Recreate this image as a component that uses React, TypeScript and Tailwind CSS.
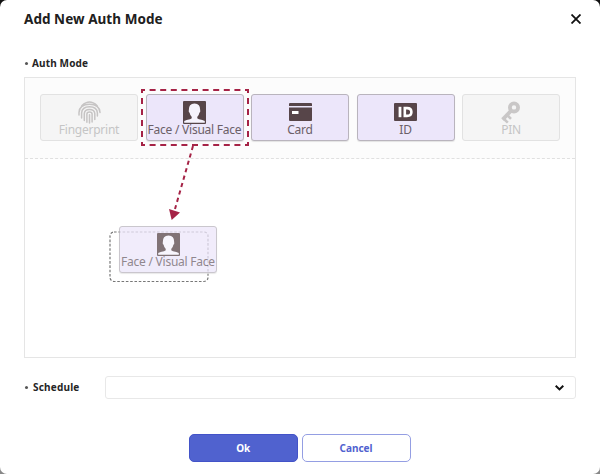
import React from "react";

function FingerprintIcon() {
  return (
    <svg width="23" height="23" viewBox="0 0 23 23" className="block" fill="none" stroke="#c6c4c4" strokeWidth="1.5" strokeLinecap="round">
      <path d="M4 4.5Q11.5 -2.5 19 4.5" />
      <path d="M1 14V11.5Q1.5 3.2 11.5 3.2Q21.5 3.2 22 11.5" />
      <path d="M3.6 17V12Q4 5.8 11.5 5.8Q19 5.8 19.4 12V15" />
      <path d="M6.3 19.5V12.5Q6.5 8.4 11.5 8.4Q16.5 8.4 16.8 12.5V18.5" />
      <path d="M8.9 21.3V13Q9 11 11.5 11Q14 11 14.1 13V21" />
      <path d="M11.5 13.8V22" />
    </svg>
  );
}

function FaceIcon() {
  return (
    <svg width="23" height="23" viewBox="0 0 23 23" className="block">
      <rect width="23" height="23" rx="1" fill="#574549" />
      <path
        d="M1.2 21.8V20Q3.2 18.6 7 18.2Q9.2 17.8 8.8 16Q7 14.4 6.6 11.8Q5.4 11.2 5.8 9.2Q5.6 2.6 11.5 2.5Q17.4 2.6 17.2 9.2Q17.6 11.2 16.4 11.8Q16 14.4 14.2 16Q13.8 17.8 16 18.2Q19.8 18.6 21.8 20V21.8Z"
        fill="#f6f3fd"
      />
    </svg>
  );
}

function CardIcon() {
  return (
    <svg width="23" height="18" viewBox="0 0 23 18" className="mb-px block">
      <path d="M1 0H22Q23 0 23 1V3H0V1Q0 0 1 0Z" fill="#574549" />
      <path d="M0 4.5H23V17Q23 18 22 18H1Q0 18 0 17Z" fill="#574549" />
      <rect x="3" y="8" width="6.5" height="3" fill="#fff" />
    </svg>
  );
}

function IdIcon() {
  return (
    <svg width="23" height="18" viewBox="0 0 23 18" className="mb-px block">
      <rect width="23" height="18" rx="1" fill="#574549" />
      <path d="M6 3.8V14.2" stroke="#fff" strokeWidth="2.8" />
      <path d="M10.8 5.1H13Q17.4 5.1 17.4 9Q17.4 12.9 13 12.9H10.8Z" fill="none" stroke="#fff" strokeWidth="2.6" />
    </svg>
  );
}

function KeyIcon() {
  return (
    <svg width="20" height="23" viewBox="0 0 20 23" className="block" fill="none" stroke="#c9c7c7">
      <circle cx="13" cy="6.4" r="4.1" strokeWidth="3.8" />
      <path d="M9.8 10L1.6 18.6" strokeWidth="3.8" />
      <path d="M6 13.8L10 17.8M2.2 17.2L6.8 21.6" strokeWidth="2.6" />
    </svg>
  );
}

type ModeProps = { label: string; children: React.ReactNode; disabled?: boolean };

function Mode({ label, children, disabled }: ModeProps) {
  return (
    <div
      className={
        "flex h-[47px] w-[98px] shrink-0 flex-col items-center rounded-[3px] border pt-[6px] text-[12px] leading-[12px] " +
        (disabled
          ? "border-[#e2e2e2] bg-[#f5f5f5] text-[#c5c5c5]"
          : "border-[#b9b4bd] bg-[#ece6fa] text-[#6b6068] shadow-[0_1px_1px_#e3e3e3]")
      }
    >
      <div className="flex h-[23px] shrink-0 items-center">{children}</div>
      <span className="tracking-[-0.24px] whitespace-nowrap">{label}</span>
    </div>
  );
}

export default function App() {
  return (
    <div className="h-[474px] w-[600px] bg-[linear-gradient(#111_50%,#888_50%)] font-['Noto_Sans','Open_Sans',sans-serif]">
      <main className="relative flex h-full flex-col overflow-hidden rounded-[7px] bg-white px-6">
        <header className="flex h-[38px] items-center justify-between">
          <h1 className="text-[13.5px] leading-[18px] font-bold tracking-[0.05px] text-[#202020]">Add New Auth Mode</h1>
          <svg width="10" height="10" viewBox="0 0 10 10" className="mr-[-5px] block" stroke="#111" strokeWidth="1.8">
            <path d="M0.5 0.5L9.5 9.5M9.5 0.5L0.5 9.5" />
          </svg>
        </header>
        <div className="mt-[17px] flex h-[16px] items-center text-[10px] font-bold tracking-[0.15px] text-[#252525]">
          <i className="mr-[4px] ml-px size-[3px] rounded-full bg-[#555]" />
          Auth Mode
        </div>
        <section className="mt-[6px] h-[281px] w-[552px] border border-[#e5e5e5]">
          <div className="flex h-[81px] gap-[7.5px] border-b border-dashed border-[#e0e0e0] bg-[#fcfcfc] pt-[16px] pl-[15px]">
            <Mode label="Fingerprint" disabled>
              <FingerprintIcon />
            </Mode>
            <Mode label="Face / Visual Face">
              <FaceIcon />
            </Mode>
            <Mode label="Card">
              <CardIcon />
            </Mode>
            <Mode label="ID">
              <IdIcon />
            </Mode>
            <Mode label="PIN" disabled>
              <KeyIcon />
            </Mode>
          </div>
        </section>
        <div className="mt-[18px] flex h-[23px] items-center">
          <div className="flex w-[81px] items-center text-[10px] font-bold tracking-[0.2px] text-[#252525]">
            <i className="mr-[5px] ml-px size-[3px] rounded-full bg-[#555]" />
            Schedule
          </div>
          <div className="flex h-[23px] w-[471px] items-center justify-end rounded-[3px] border border-[#e8e8e8] pr-[11px]">
            <svg width="9" height="6" viewBox="0 0 9 6" fill="none" stroke="#111" strokeWidth="2">
              <path d="M0.7 0.8L4.5 4.4L8.3 0.8" />
            </svg>
          </div>
        </div>
        <footer className="mt-[35px] flex gap-1 pl-[165px] text-[10px] font-bold">
          <button className="h-[28px] w-[108.5px] rounded-[5px] border border-[#4353c8] bg-[#5062cf] text-white">Ok</button>
          <button className="h-[28px] w-[109px] rounded-[5px] border border-[#949ee3] bg-white text-[#5062cf]">Cancel</button>
        </footer>

        <svg className="pointer-events-none absolute top-0 left-0" width="600" height="474" fill="none">
          <g stroke="#a52346" strokeWidth="2">
            <path d="M141 90H249M141 145H249" strokeDasharray="6 4.6" strokeDashoffset="2" />
            <path d="M142 89V146M248 89V146" strokeDasharray="6 5" strokeDashoffset="2" />
            <path d="M193 146L175 209" strokeDasharray="4.2 3.5" />
          </g>
          <path d="M169 209L180 212.5L171.7 220Z" fill="#a52346" />
          <rect x="110" y="232" width="98" height="49.5" rx="4" stroke="#777" strokeWidth="1.2" strokeDasharray="2.6 1.7" />
        </svg>
        <div className="absolute top-[226px] left-[119px] opacity-75">
          <Mode label="Face / Visual Face">
            <FaceIcon />
          </Mode>
        </div>
      </main>
    </div>
  );
}
